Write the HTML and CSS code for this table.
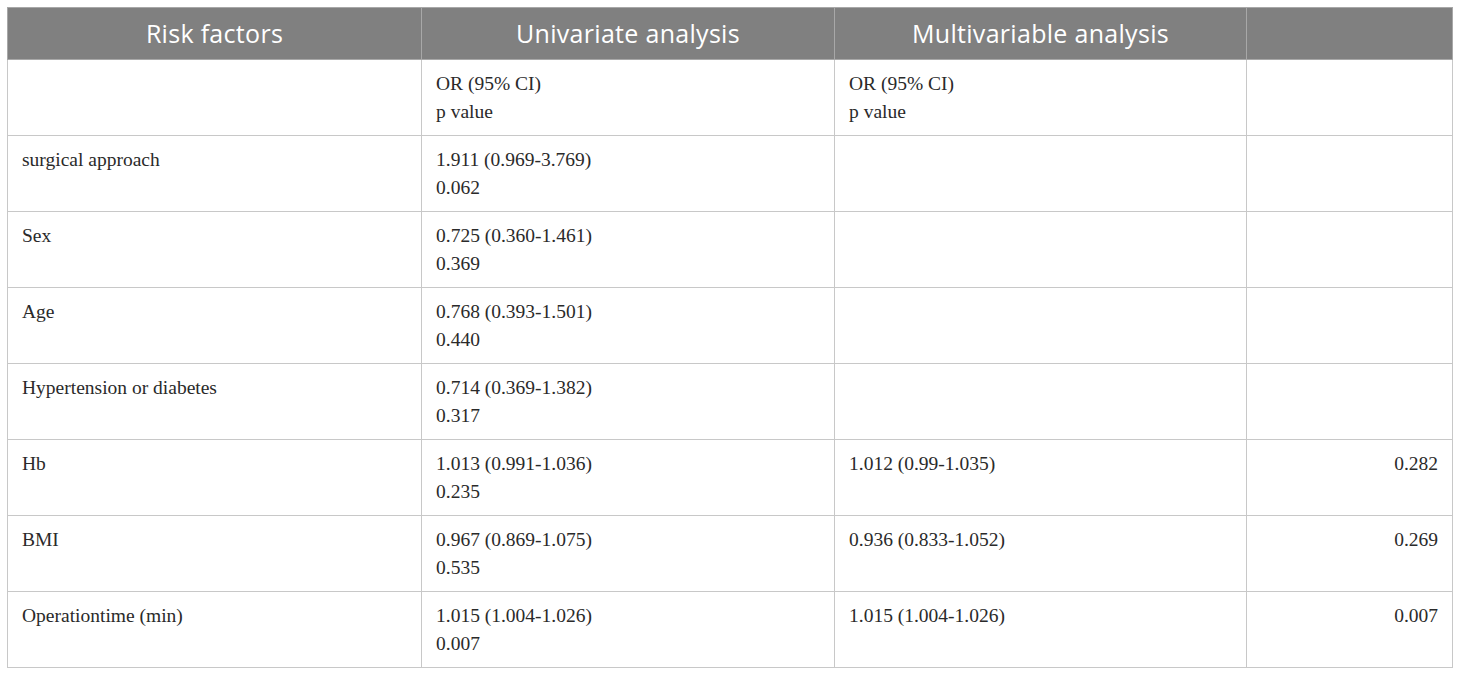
FILE: index.html
```html
<!DOCTYPE html>
<html lang="en">
<head>
<meta charset="utf-8">
<title>Risk factors</title>
<link rel="stylesheet" href="styles.css">
</head>
<body>
<table class="data">
  <colgroup>
    <col class="c1"><col class="c2"><col class="c3"><col class="c4">
  </colgroup>
  <thead>
    <tr>
      <th>Risk factors</th>
      <th>Univariate analysis</th>
      <th>Multivariable analysis</th>
      <th></th>
    </tr>
  </thead>
  <tbody>
    <tr><td></td><td>OR (95% CI)<br>p value</td><td>OR (95% CI)<br>p value</td><td class="num"></td></tr>
    <tr><td>surgical approach</td><td>1.911 (0.969-3.769)<br>0.062</td><td></td><td class="num"></td></tr>
    <tr><td>Sex</td><td>0.725 (0.360-1.461)<br>0.369</td><td></td><td class="num"></td></tr>
    <tr><td>Age</td><td>0.768 (0.393-1.501)<br>0.440</td><td></td><td class="num"></td></tr>
    <tr><td>Hypertension or diabetes</td><td>0.714 (0.369-1.382)<br>0.317</td><td></td><td class="num"></td></tr>
    <tr><td>Hb</td><td>1.013 (0.991-1.036)<br>0.235</td><td>1.012 (0.99-1.035)</td><td class="num">0.282</td></tr>
    <tr><td>BMI</td><td>0.967 (0.869-1.075)<br>0.535</td><td>0.936 (0.833-1.052)</td><td class="num">0.269</td></tr>
    <tr><td>Operationtime (min)</td><td>1.015 (1.004-1.026)<br>0.007</td><td>1.015 (1.004-1.026)</td><td class="num">0.007</td></tr>
  </tbody>
</table>
</body>
</html>
```

FILE: styles.css
```css
html, body {
  margin: 0;
  padding: 0;
  background: #ffffff;
}
body {
  padding: 7px;
}
.data {
  width: 1445px;
  border-collapse: collapse;
  table-layout: fixed;
  font-family: "Liberation Serif", "Times New Roman", serif;
  font-size: 19.5px;
  color: #2a2a2a;
}
.c1 { width: 414px; }
.c2 { width: 413px; }
.c3 { width: 412px; }
.c4 { width: 206px; }
.data th {
  background: #808080;
  color: #ffffff;
  font-family: "Open Sans", "Noto Sans", sans-serif;
  font-weight: 400;
  font-size: 25px;
  letter-spacing: 0.3px;
  height: 52px;
  padding: 0 14px 1px 14px;
  text-align: center;
  vertical-align: middle;
  border: 1px solid #a8a8a8;
  box-sizing: border-box;
}
.data td {
  height: 73px;
  box-sizing: border-box;
  padding: 10px 14px 9px 14px;
  vertical-align: top;
  text-align: left;
  line-height: 28px;
  border: 1px solid #c8c8c8;
}
.data td.num {
  text-align: right;
}
```
